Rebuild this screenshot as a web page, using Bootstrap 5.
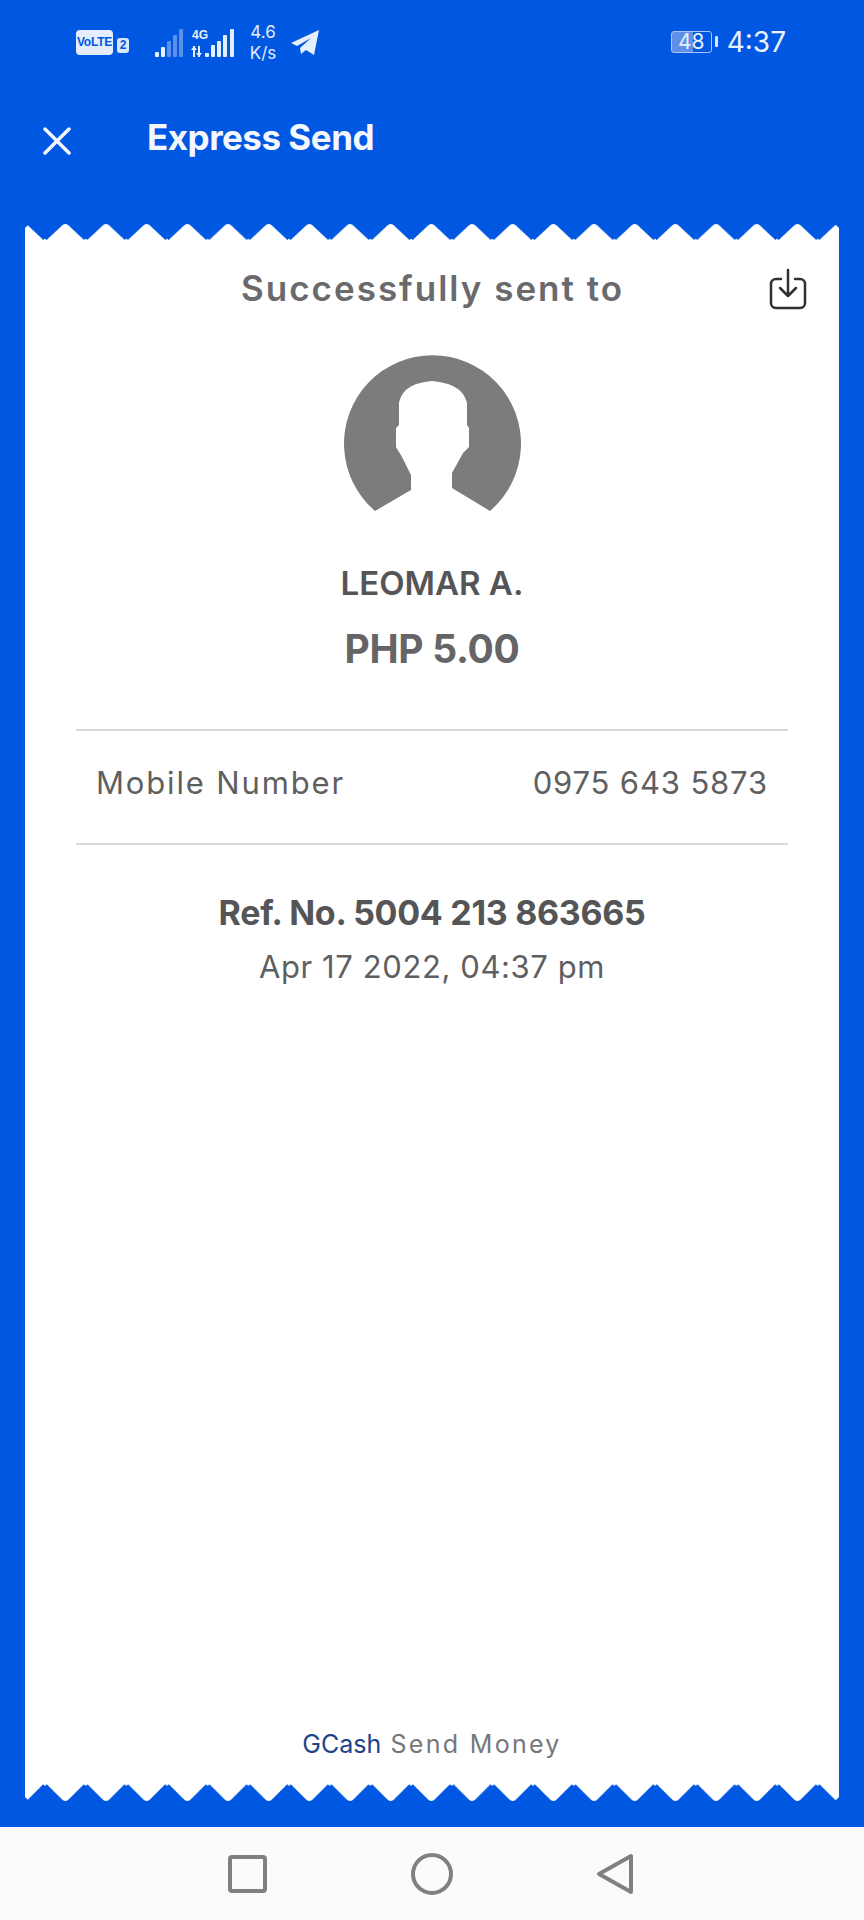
<!DOCTYPE html>
<html lang="en">
<head>
  <meta charset="UTF-8" />
  <meta name="viewport" content="width=device-width, initial-scale=1.0"/>
  <title>Express Send</title>
  <link href="https://cdn.jsdelivr.net/npm/bootstrap@5.3.0/dist/css/bootstrap.min.css" rel="stylesheet"/>
  <style>
    body {
      background-color: #0057e1;
      font-family: "Inter", "Liberation Sans", sans-serif;
      color: #5f5f61;
    }
    .phone-screen { height: 1920px; }
    .blue-area { height: 1827px; }

    /* status bar */
    .status-row { height: 85px; padding: 22px 78px 0 76px; color: #e6effc; }
    .volte-box { width: 37px; height: 25px; background: #e3edfb; border-radius: 4px; color: #0057e1; font: 700 12px/25px "Liberation Sans", sans-serif; letter-spacing: -.2px; text-align: center; margin-top: 8px; }
    .sim-box { width: 12px; height: 15px; background: #dbe7fa; border-radius: 3px; color: #0057e1; font: 700 12px/15px "Liberation Sans", sans-serif; text-align: center; margin: 16px 0 0 4px; }
    .signal-icons { margin: 5px 0 0 26px; }
    .speed-text { width: 30px; margin-left: 13px; font: 400 17px/21px "Inter", sans-serif; text-align: center; }
    .plane-icon { margin: 8px 0 0 13px; }
    .clock-text { font: 400 28px/34px "Inter", sans-serif; margin: 3px 0 0 9px; color: #eaf1fd; }
    .battery-box { width: 41px; height: 22px; border: 1.5px solid #a9c6f4; border-radius: 3px; margin: 9px 0 0 2px; font: 400 21px/19px "Inter", sans-serif; text-align: center; background: linear-gradient(90deg, #5f8fe8 54%, transparent 54%); }
    .battery-nub { width: 3px; height: 11px; background: #dbe7fa; border-radius: 1px; margin: 14px 0 0 3px; }

    /* app bar */
    .app-bar { height: 138px; padding: 35px 0 0 43px; }
    .close-icon { margin-top: 7px; }
    .app-title { margin: 0 0 0 76px; font-size: 35px; font-weight: 700; color: #f4f8fe; letter-spacing: -0.5px; line-height: 1; }

    /* receipt */
    .receipt { margin: 0 25px; height: 1579px; }
    .receipt-edge { display: block; width: 814px; }
    .receipt-body { background: #fff; padding: 24px 33px 22px; }
    .sent-title { font-size: 35px; font-weight: 600; letter-spacing: 2px; color: #6a6a6c; line-height: 46px; margin: 0; }
    .save-icon { margin: 3px -1px 0 0; }
    .title-spacer { width: 38px; }
    .person-icon { margin: 44px 0 0 2px; }
    .name-text { font-size: 33px; font-weight: 600; color: #555557; line-height: 40px; margin-top: 51px; }
    .amount-text { font-size: 39px; font-weight: 700; color: #656567; line-height: 50px; margin-top: 21px; letter-spacing: -0.3px; }
    .detail-row { border-top: 2px solid #d9d9d9; border-bottom: 2px solid #d9d9d9; margin: 55px 18px 0; height: 116px; padding: 0 20px 7px; font-size: 31px; color: #5f5f61; }
    .detail-label { letter-spacing: 1.85px; }
    .detail-value { letter-spacing: .85px; }
    .ref-text { font-size: 34px; font-weight: 700; letter-spacing: -0.3px; color: #555557; line-height: 44px; margin-top: 46px; }
    .date-text { font-size: 31px; letter-spacing: .6px; color: #5f5f61; line-height: 40px; margin-top: 12px; }
    .brand-line { font-size: 25px; letter-spacing: 2.3px; color: #77777a; line-height: 34px; }
    .brand-name { color: #1d4388; letter-spacing: 0; }

    /* android nav */
    .nav-strip { height: 93px; background: #fbfbfb; padding-left: 20px; }
  </style>
</head>
<body>
  <div class="phone-screen d-flex flex-column">
    <div class="blue-area">

      <!-- Status bar -->
      <div class="status-row d-flex align-items-start">
        <div class="d-flex">
          <div class="volte-box">VoLTE</div>
          <div class="sim-box">2</div>
        </div>
        <svg class="signal-icons" width="80" height="32" viewBox="0 0 80 32">
          <g fill="#5d90ea">
            <rect x="12" y="14" width="4" height="16" rx="1"/><rect x="18" y="8" width="4" height="22" rx="1"/><rect x="24" y="2" width="4" height="28" rx="1"/>
          </g>
          <g fill="#e6effc">
            <rect x="0" y="25" width="4" height="5" rx="1"/><rect x="6" y="20" width="4" height="10" rx="1"/>
            <rect x="50" y="26" width="4" height="4" rx="1"/><rect x="56" y="18" width="4" height="12" rx="1"/><rect x="62" y="14" width="4" height="16" rx="1"/><rect x="68" y="8" width="4" height="22" rx="1"/><rect x="75" y="2" width="4" height="28" rx="1"/>
            <rect x="38" y="19" width="2" height="11"/><rect x="43" y="19" width="2" height="11"/><path d="M36 23l3-4 3 4zM41 26l3 4 3-4z"/>
          </g>
          <text x="37" y="12" font-family="Liberation Sans" font-weight="700" font-size="12" fill="#e6effc">4G</text>
        </svg>
        <div class="speed-text">4.6<br>K/s</div>
        <svg class="plane-icon" width="28" height="26" viewBox="0 0 28 26">
          <path d="M0 13 28 0 23 25 15 20 10 24 9 18 20 8 6 16Z" fill="#e6effc"/>
        </svg>
        <div class="ms-auto d-flex">
          <div class="battery-box">48</div>
          <div class="battery-nub"></div>
          <div class="clock-text">4:37</div>
        </div>
      </div>

      <!-- App bar -->
      <div class="app-bar d-flex align-items-start">
        <svg class="close-icon" width="28" height="28" viewBox="0 0 28 28">
          <path d="M2 2 26 26M26 2 2 26" stroke="#f4f8fe" stroke-width="3.5" stroke-linecap="round"/>
        </svg>
        <h1 class="app-title">Express Send</h1>
      </div>

      <!-- Receipt -->
      <div class="receipt d-flex flex-column">
        <svg class="receipt-edge" height="18" viewBox="0 0 814 18">
          <defs>
            <pattern id="teethTop" x="20" y="0" width="40.67" height="18" patternUnits="userSpaceOnUse">
              <path d="M0 18.5 17.6 2Q20.33 0 23.1 2L40.67 18.5Z" fill="#fff"/>
              <path d="M0 15.5V18.5H3ZM40.67 15.5V18.5H37.67Z" fill="#fff"/>
            </pattern>
            <pattern id="teethBottom" x="20" y="0" width="40.67" height="19" patternUnits="userSpaceOnUse">
              <path d="M0 -.5 17.6 17Q20.33 19 23.1 17L40.67 -.5Z" fill="#fff"/>
              <path d="M0 3V0H3ZM40.67 3V0H37.67Z" fill="#fff"/>
            </pattern>
          </defs>
          <rect width="814" height="18" fill="url(#teethTop)"/>
          <path d="M0 0H5L0 5ZM814 0H809L814 5Z" fill="#0057e1"/>
        </svg>
        <div class="receipt-body flex-grow-1 d-flex flex-column">
          <div class="d-flex justify-content-between align-items-start">
            <div class="title-spacer"></div>
            <h2 class="sent-title">Successfully sent to</h2>
            <svg class="save-icon" width="38" height="42" viewBox="0 0 38 42" fill="none" stroke="#303032" stroke-width="2.5" stroke-linecap="round" stroke-linejoin="round">
              <path d="M12 11H7a5 5 0 0 0-5 5v19a5 5 0 0 0 5 5h24a5 5 0 0 0 5-5V16a5 5 0 0 0-5-5h-5"/>
              <path d="M19 2V28M11 20l8 8 8-8"/>
            </svg>
          </div>

          <svg class="person-icon align-self-center" width="178" height="157" viewBox="344 355 178 157">
            <path fill="#7c7c7c" d="M375 511A88.5 88.5 0 1 1 490 511L452 488V473L463 453 469 447V428L467 425V403C464 390 453 383 432 381 411 383 402 390 399 403V425L396 428V447L402 457 411 475V490Z"/>
          </svg>

          <div class="name-text text-center">LEOMAR A.</div>
          <div class="amount-text text-center">PHP 5.00</div>

          <div class="detail-row d-flex justify-content-between align-items-center">
            <span class="detail-label">Mobile Number</span>
            <span class="detail-value">0975 643 5873</span>
          </div>

          <div class="ref-text text-center">Ref. No. 5004 213 863665</div>
          <div class="date-text text-center">Apr 17 2022, 04:37 pm</div>

          <div class="brand-line text-center mt-auto"><span class="brand-name">GCash</span> Send Money</div>
        </div>
        <svg class="receipt-edge" height="19" viewBox="0 0 814 19">
          <rect width="814" height="19" fill="url(#teethBottom)"/>
          <path d="M0 19H5L0 14ZM814 19H809L814 14Z" fill="#0057e1"/>
        </svg>
      </div>
    </div>

    <!-- Android nav -->
    <div class="nav-strip d-flex justify-content-center align-items-center">
      <svg width="440" height="44" viewBox="0 0 440 44" fill="none" stroke="#808080" stroke-width="4" stroke-linejoin="round">
        <rect x="8" y="5" width="35" height="34" rx="2"/>
        <circle cx="210" cy="22" r="19"/>
        <path d="M409 4V40L377 22Z"/>
      </svg>
    </div>
  </div>
</body>
</html>
